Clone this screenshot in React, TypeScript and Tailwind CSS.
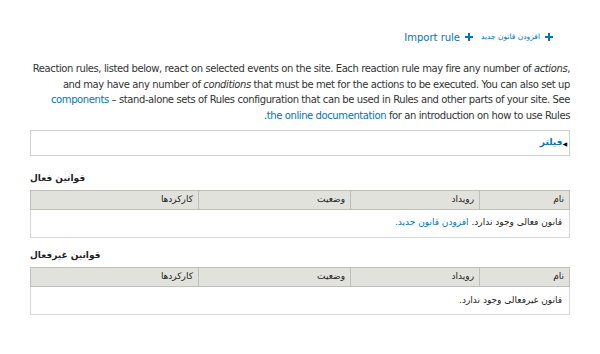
import React from "react"

function Plus() {
  return (
    <svg width="8" height="8" viewBox="0 0 8 8" className="inline-block">
      <path d="M3 0h2v3h3v2H5v3H3V5H0V3h3z" fill="#0074bd" />
    </svg>
  )
}

function RulesTable({ empty }: { empty: React.ReactNode }) {
  return (
    <table className="w-full border-collapse border border-[#d7d7d3] text-[9px] text-[#222]">
      <thead>
        <tr className="bg-[#e1e2dc] h-[19px]">
          <th className="w-[90px] border border-[#bfc0bb] px-[5px] text-right font-normal">نام</th>
          <th className="w-[129px] border border-[#bfc0bb] px-[5px] text-right font-normal">رویداد</th>
          <th className="w-[152px] border border-[#bfc0bb] px-[5px] text-right font-normal">وضعیت</th>
          <th className="border border-[#bfc0bb] px-[5px] text-right font-normal">کارکردها</th>
        </tr>
      </thead>
      <tbody>
        <tr className="h-[28px]">
          <td colSpan={4} className="px-[7px] text-right">{empty}</td>
        </tr>
      </tbody>
    </table>
  )
}

export default function App() {
  return (
    <div dir="rtl" className="w-[600px] h-[354px] bg-white px-[30px] pt-[30px] font-['DejaVu_Sans',sans-serif] text-[#333]">
      <ul className="flex gap-[8px] pr-[17px] text-[#0074bd] h-[14px] items-center">
        <li className="flex items-center gap-[5px]"><Plus /><span className="text-[7.5px]">افزودن قانون جدید</span></li>
        <li className="flex items-center gap-[5px]"><Plus /><span className="text-[10px]">Import rule</span></li>
      </ul>

      <p className="mt-[17px] text-[10px] leading-[15.5px] tracking-[-0.4px] text-right">
        Reaction rules, listed below, react on selected events on the site. Each reaction rule may fire any number of <em>actions</em>, and may have any number of <em>conditions</em> that must be met for the actions to be executed. You can also set up <span className="text-[#0074bd]">components</span> – stand-alone sets of Rules configuration that can be used in Rules and other parts of your site. See <span className="whitespace-nowrap text-[#0074bd]">the online documentation</span> for an introduction on how to use Rules.
      </p>

      <div className="mt-[7px] h-[26px] border border-[#d0d0d0] flex items-center pr-[2px]">
        <span className="text-[6px] text-black">◀</span>
        <span className="text-[9px] font-bold text-[#0074bd]">فیلتر</span>
      </div>

      <h2 className="mt-[16px] text-left text-[9px] font-bold text-[#222]">قوانین فعال</h2>
      <div className="mt-[4px]">
        <RulesTable empty={<>قانون فعالی وجود ندارد. <span className="text-[#0074bd]">افزودن قانون جدید.</span></>} />
      </div>

      <h2 className="mt-[11px] text-left text-[9px] font-bold text-[#222]">قوانین غیرفعال</h2>
      <div className="mt-[5px]">
        <RulesTable empty={<>قانون غیرفعالی وجود ندارد.</>} />
      </div>
    </div>
  )
}
